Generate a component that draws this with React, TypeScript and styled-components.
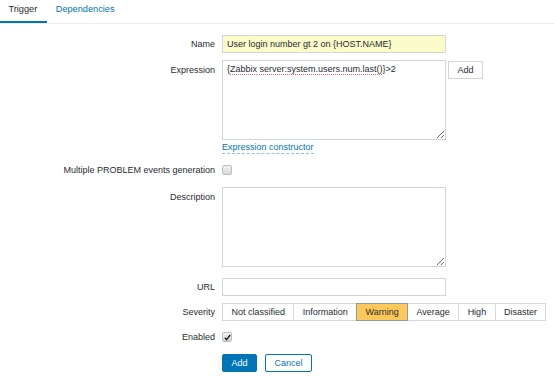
import React from 'react';
import styled, { createGlobalStyle } from 'styled-components';

const GlobalStyle = createGlobalStyle`
  body {
    margin: 0;
    background: #ffffff;
    font-family: "Liberation Sans", Arial, sans-serif;
    font-size: 9px;
    color: #1f2c33;
  }
`;

const Page = styled.div`
  width: 554px;
  height: 377px;
  overflow: hidden;
  background: #fff;
`;

const TabBar = styled.div`
  display: flex;
  height: 23px;
  border-bottom: 1px solid #ebeef0;
`;

const Tab = styled.div<{ $active?: boolean }>`
  padding: 0 10px 0 8.5px;
  font-size: 9.2px;
  line-height: 19px;
  height: 21px;
  color: ${(p) => (p.$active ? '#1f2c33' : '#0275b8')};
  border-bottom: 2px solid ${(p) => (p.$active ? '#0275b8' : 'transparent')};
  margin-bottom: -1px;
`;

const Form = styled.div`
  padding-top: 11px;
`;

const Row = styled.div<{ $mt?: number }>`
  display: grid;
  grid-template-columns: 215px 1fr;
  column-gap: 7px;
  margin-top: ${(p) => p.$mt ?? 7}px;
`;

const Label = styled.div<{ $top?: boolean }>`
  text-align: right;
  line-height: 18px;
  align-self: ${(p) => (p.$top ? 'start' : 'center')};
  padding-top: ${(p) => (p.$top ? 1 : 0)}px;
`;

const Field = styled.div`
  display: flex;
  align-items: center;
`;

const FieldStack = styled.div`
  display: flex;
  flex-direction: column;
  align-items: flex-start;
`;

const TextInput = styled.div<{ $bg?: string }>`
  box-sizing: border-box;
  width: 224px;
  height: 18px;
  border: 1px solid #cfd7db;
  background: ${(p) => p.$bg ?? '#fff'};
  padding: 0 4px;
  line-height: 16px;
  white-space: nowrap;
  overflow: hidden;
`;

const TextArea = styled.div`
  box-sizing: border-box;
  width: 224px;
  height: 80px;
  border: 1px solid #cfd7db;
  background: #fff;
  padding: 1px 4px;
  line-height: 14px;
  overflow: auto;
  resize: both;
`;

const Misspelled = styled.span`
  text-decoration: underline dotted #e5606a;
  text-decoration-thickness: 1px;
  text-underline-offset: 1.5px;
`;

const ExpressionWrap = styled.div`
  display: flex;
  align-items: flex-start;
`;

const SmallButton = styled.div`
  box-sizing: border-box;
  margin: 1px 0 0 2px;
  width: 35px;
  height: 18px;
  border: 1px solid #cfd7db;
  background: #fff;
  text-align: center;
  line-height: 16px;
  color: #1f2c33;
`;

const Link = styled.div`
  margin-top: 2px;
  line-height: 11px;
  color: #0275b8;
  border-bottom: 1px dashed rgba(2, 117, 184, 0.45);
`;

const Check = styled.div`
  box-sizing: border-box;
  width: 10px;
  height: 10px;
  border: 1px solid #b7bfc3;
  border-radius: 2px;
  background: linear-gradient(#f2f2f2, #d8d8d8);
  display: flex;
  align-items: center;
  justify-content: center;
`;

const Segments = styled.div`
  display: flex;
  height: 18px;
`;

const Segment = styled.div<{ $color?: string; $selected?: boolean }>`
  box-sizing: border-box;
  height: 18px;
  padding: 0 8.4px;
  line-height: 16px;
  border: 1px solid ${(p) => (p.$selected ? '#8f9da5' : '#d3dadd')};
  background: ${(p) => p.$color ?? '#fff'};
  margin-left: -1px;
  position: ${(p) => (p.$selected ? 'relative' : 'static')};
  white-space: nowrap;
  &:first-child {
    margin-left: 0;
  }
`;

const Buttons = styled.div`
  display: flex;
  gap: 8px;
`;

const Button = styled.div<{ $primary?: boolean }>`
  box-sizing: border-box;
  height: 18px;
  padding: 0 8.5px;
  line-height: 16px;
  border: 1px solid #0275b8;
  border-radius: 2px;
  background: ${(p) => (p.$primary ? '#0275b8' : '#fff')};
  color: ${(p) => (p.$primary ? '#fff' : '#0275b8')};
`;

const severities = [
  { name: 'Not classified' },
  { name: 'Information' },
  { name: 'Warning', color: '#ffc859', selected: true },
  { name: 'Average' },
  { name: 'High' },
  { name: 'Disaster' },
];

const App: React.FC = () => {
  return (
    <Page>
      <GlobalStyle />
      <TabBar>
        <Tab $active>Trigger</Tab>
        <Tab>Dependencies</Tab>
      </TabBar>
      <Form>
        <Row $mt={0}>
          <Label>Name</Label>
          <Field>
            <TextInput $bg="#fbfbc9">User login number gt 2 on {'{HOST.NAME}'}</TextInput>
          </Field>
        </Row>
        <Row>
          <Label $top>Expression</Label>
          <FieldStack>
            <ExpressionWrap>
              <TextArea>
                {'{'}
                <Misspelled>Zabbix</Misspelled> <Misspelled>server:system.users.num.last()</Misspelled>
                {'}>2'}
              </TextArea>
              <SmallButton>Add</SmallButton>
            </ExpressionWrap>
            <Link>Expression constructor</Link>
          </FieldStack>
        </Row>
        <Row>
          <Label>Multiple PROBLEM events generation</Label>
          <Field>
            <Check />
          </Field>
        </Row>
        <Row $mt={8}>
          <Label $top>Description</Label>
          <Field>
            <TextArea />
          </Field>
        </Row>
        <Row $mt={11}>
          <Label>URL</Label>
          <Field>
            <TextInput />
          </Field>
        </Row>
        <Row>
          <Label>Severity</Label>
          <Field>
            <Segments>
              {severities.map((s) => (
                <Segment key={s.name} $color={s.color} $selected={s.selected}>
                  {s.name}
                </Segment>
              ))}
            </Segments>
          </Field>
        </Row>
        <Row>
          <Label>Enabled</Label>
          <Field>
            <Check>
              <svg width="7" height="7" viewBox="0 0 8 8">
                <path d="M1 4.2 L3 6.4 L7 1.2" fill="none" stroke="#222" strokeWidth="1.6" />
              </svg>
            </Check>
          </Field>
        </Row>
        <Row $mt={8}>
          <div />
          <Buttons>
            <Button $primary>Add</Button>
            <Button>Cancel</Button>
          </Buttons>
        </Row>
      </Form>
    </Page>
  );
};

export default App;
